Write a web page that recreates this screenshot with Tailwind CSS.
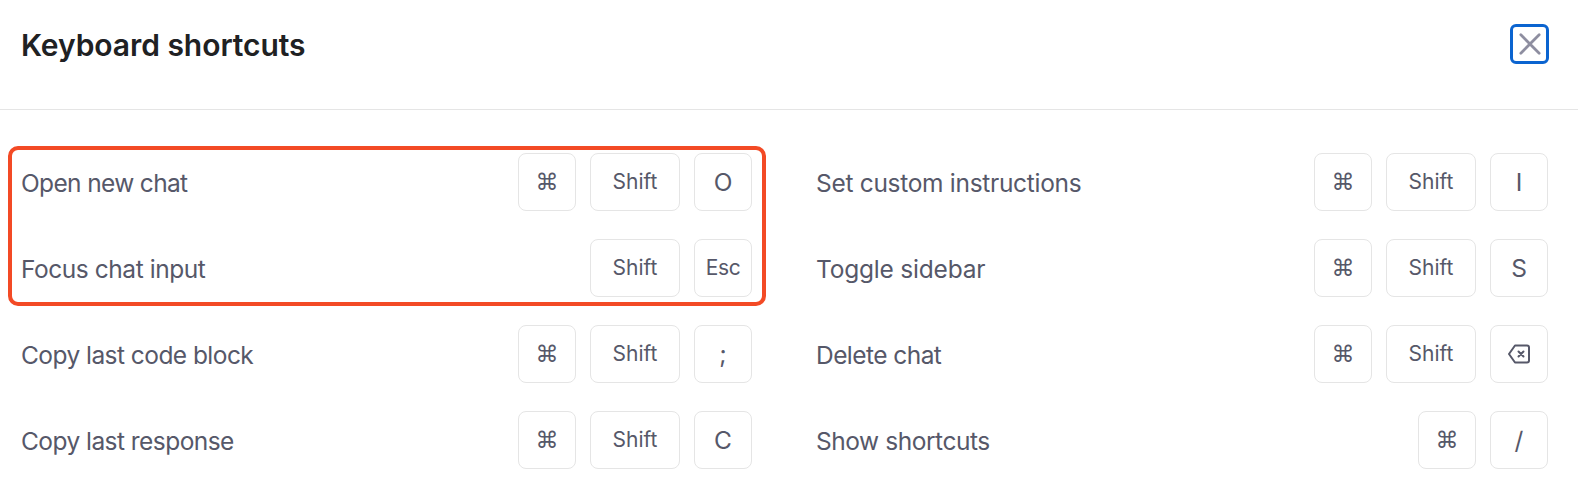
<!doctype html>
<html>
<head>
<meta charset="utf-8">
<script src="https://cdn.jsdelivr.net/npm/@tailwindcss/browser@4"></script>
</head>
<body class="bg-white font-['Inter',sans-serif]">
<div class="relative w-[1578px] h-[500px] overflow-hidden bg-white">
  <header class="h-[110px] border-b border-[#e5e5e5] pl-[21px] pr-[29px] flex items-start justify-between">
    <h1 class="mt-[25px] text-[30px] leading-[40px] font-semibold text-[#202123] tracking-[-0.05px]">Keyboard shortcuts</h1>
    <button class="mt-[24px] w-[39px] h-[40px] rounded-[6px] border-[3px] border-[#0b64d0] flex items-center justify-center">
      <svg class="w-[22px] h-[22px] text-[#8e8ea0]" viewBox="0 0 24 24" fill="none" stroke="currentColor" stroke-width="3" stroke-linecap="round"><path d="M2 2 22 22M22 2 2 22"/></svg>
    </button>
  </header>

  <div class="grid grid-cols-[732px_732px] gap-x-[64px] gap-y-[28px] pl-[20px] pt-[43px] text-[#565869]">
    <div class="flex items-center h-[58px]">
      <span class="text-[24.5px] tracking-[-0.65px] pt-[3px] pl-px mr-auto">Open new chat</span>
      <div class="flex gap-[14px]">
        <kbd class="w-[58px] h-[58px] rounded-[8px] border border-[#e5e5e5] flex items-center justify-center text-[23px] font-['DejaVu_Sans',sans-serif]">⌘</kbd>
        <kbd class="w-[90px] h-[58px] rounded-[8px] border border-[#e5e5e5] flex items-center justify-center text-[21px] pb-[1px] font-['Inter',sans-serif]">Shift</kbd>
        <kbd class="w-[58px] h-[58px] rounded-[8px] border border-[#e5e5e5] flex items-center justify-center text-[24.5px] font-['Inter',sans-serif]">O</kbd>
      </div>
    </div>
    <div class="flex items-center h-[58px]">
      <span class="text-[24.5px] tracking-[-0.3px] pt-[3px] mr-auto">Set custom instructions</span>
      <div class="flex gap-[14px]">
        <kbd class="w-[58px] h-[58px] rounded-[8px] border border-[#e5e5e5] flex items-center justify-center text-[23px] font-['DejaVu_Sans',sans-serif]">⌘</kbd>
        <kbd class="w-[90px] h-[58px] rounded-[8px] border border-[#e5e5e5] flex items-center justify-center text-[21px] pb-[1px] font-['Inter',sans-serif]">Shift</kbd>
        <kbd class="w-[58px] h-[58px] rounded-[8px] border border-[#e5e5e5] flex items-center justify-center text-[24.5px] font-['Inter',sans-serif]">I</kbd>
      </div>
    </div>
    <div class="flex items-center h-[58px]">
      <span class="text-[24.5px] tracking-[-0.45px] pt-[3px] pl-px mr-auto">Focus chat input</span>
      <div class="flex gap-[14px]">
        <kbd class="w-[90px] h-[58px] rounded-[8px] border border-[#e5e5e5] flex items-center justify-center text-[21px] pb-[1px] font-['Inter',sans-serif]">Shift</kbd>
        <kbd class="w-[58px] h-[58px] rounded-[8px] border border-[#e5e5e5] flex items-center justify-center text-[21px] tracking-[-0.4px] font-['Inter',sans-serif]">Esc</kbd>
      </div>
    </div>
    <div class="flex items-center h-[58px]">
      <span class="text-[24.5px] tracking-[-0.2px] pt-[3px] mr-auto">Toggle sidebar</span>
      <div class="flex gap-[14px]">
        <kbd class="w-[58px] h-[58px] rounded-[8px] border border-[#e5e5e5] flex items-center justify-center text-[23px] font-['DejaVu_Sans',sans-serif]">⌘</kbd>
        <kbd class="w-[90px] h-[58px] rounded-[8px] border border-[#e5e5e5] flex items-center justify-center text-[21px] pb-[1px] font-['Inter',sans-serif]">Shift</kbd>
        <kbd class="w-[58px] h-[58px] rounded-[8px] border border-[#e5e5e5] flex items-center justify-center text-[24.5px] font-['Inter',sans-serif]">S</kbd>
      </div>
    </div>
    <div class="flex items-center h-[58px]">
      <span class="text-[24.5px] tracking-[-0.55px] pt-[3px] pl-px mr-auto">Copy last code block</span>
      <div class="flex gap-[14px]">
        <kbd class="w-[58px] h-[58px] rounded-[8px] border border-[#e5e5e5] flex items-center justify-center text-[23px] font-['DejaVu_Sans',sans-serif]">⌘</kbd>
        <kbd class="w-[90px] h-[58px] rounded-[8px] border border-[#e5e5e5] flex items-center justify-center text-[21px] pb-[1px] font-['Inter',sans-serif]">Shift</kbd>
        <kbd class="w-[58px] h-[58px] rounded-[8px] border border-[#e5e5e5] flex items-center justify-center text-[24.5px] font-['Inter',sans-serif]">;</kbd>
      </div>
    </div>
    <div class="flex items-center h-[58px]">
      <span class="text-[24.5px] tracking-[-0.55px] pt-[3px] mr-auto">Delete chat</span>
      <div class="flex gap-[14px]">
        <kbd class="w-[58px] h-[58px] rounded-[8px] border border-[#e5e5e5] flex items-center justify-center text-[23px] font-['DejaVu_Sans',sans-serif]">⌘</kbd>
        <kbd class="w-[90px] h-[58px] rounded-[8px] border border-[#e5e5e5] flex items-center justify-center text-[21px] pb-[1px] font-['Inter',sans-serif]">Shift</kbd>
        <kbd class="w-[58px] h-[58px] rounded-[8px] border border-[#e5e5e5] flex items-center justify-center">
          <svg class="w-[24px] h-[24px]" viewBox="0 0 24 24" fill="none" stroke="currentColor" stroke-width="2" stroke-linecap="round" stroke-linejoin="round"><path d="M8 3.500h12a2 2 0 0 1 2 2v13a2 2 0 0 1-2 2H8l-6-8.500z"/><path d="m11.500 9.500 5 5M16.500 9.500l-5 5"/></svg>
        </kbd>
      </div>
    </div>
    <div class="flex items-center h-[58px]">
      <span class="text-[24.5px] tracking-[-0.55px] pt-[3px] pl-px mr-auto">Copy last response</span>
      <div class="flex gap-[14px]">
        <kbd class="w-[58px] h-[58px] rounded-[8px] border border-[#e5e5e5] flex items-center justify-center text-[23px] font-['DejaVu_Sans',sans-serif]">⌘</kbd>
        <kbd class="w-[90px] h-[58px] rounded-[8px] border border-[#e5e5e5] flex items-center justify-center text-[21px] pb-[1px] font-['Inter',sans-serif]">Shift</kbd>
        <kbd class="w-[58px] h-[58px] rounded-[8px] border border-[#e5e5e5] flex items-center justify-center text-[24.5px] font-['Inter',sans-serif]">C</kbd>
      </div>
    </div>
    <div class="flex items-center h-[58px]">
      <span class="text-[24.5px] tracking-[-0.45px] pt-[3px] mr-auto">Show shortcuts</span>
      <div class="flex gap-[14px]">
        <kbd class="w-[58px] h-[58px] rounded-[8px] border border-[#e5e5e5] flex items-center justify-center text-[23px] font-['DejaVu_Sans',sans-serif]">⌘</kbd>
        <kbd class="w-[58px] h-[58px] rounded-[8px] border border-[#e5e5e5] flex items-center justify-center text-[24.5px] font-['Inter',sans-serif]">/</kbd>
      </div>
    </div>
  </div>

  <div class="absolute left-[8px] top-[146px] w-[758px] h-[160px] rounded-[10px] border-[4px] border-[#f34a25]"></div>
</div>
</body>
</html>
